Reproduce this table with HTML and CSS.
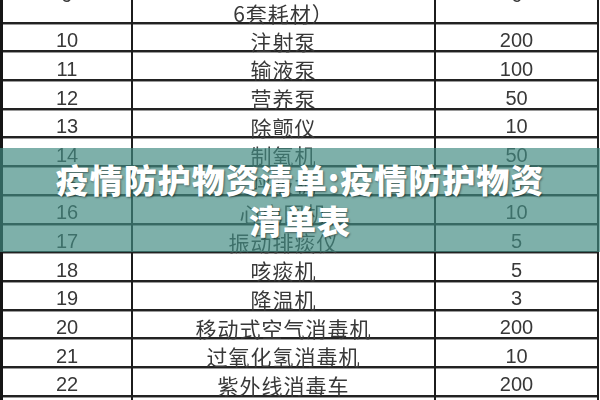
FILE: index.html
```html
<!DOCTYPE html>
<html lang="zh-CN">
<head>
<meta charset="utf-8">
<title>疫情防护物资清单</title>
<link rel="stylesheet" href="styles.css">
</head>
<body>
<div class="page">
  <div class="table">
    <div class="row tall">
      <div class="cell num">9</div>
      <div class="cell name two">高流量呼吸湿化治疗仪（含<br>6套耗材）</div>
      <div class="cell num">6</div>
    </div>
    <div class="row"><div class="cell num">10</div><div class="cell name">注射泵</div><div class="cell num">200</div></div>
    <div class="row"><div class="cell num">11</div><div class="cell name">输液泵</div><div class="cell num">100</div></div>
    <div class="row"><div class="cell num">12</div><div class="cell name">营养泵</div><div class="cell num">50</div></div>
    <div class="row"><div class="cell num">13</div><div class="cell name">除颤仪</div><div class="cell num">10</div></div>
    <div class="row"><div class="cell num">14</div><div class="cell name">制氧机</div><div class="cell num">50</div></div>
    <div class="row"><div class="cell num">15</div><div class="cell name">呼吸机</div><div class="cell num">5</div></div>
    <div class="row"><div class="cell num">16</div><div class="cell name">心电图机</div><div class="cell num">10</div></div>
    <div class="row"><div class="cell num">17</div><div class="cell name">振动排痰仪</div><div class="cell num">5</div></div>
    <div class="row"><div class="cell num">18</div><div class="cell name">咳痰机</div><div class="cell num">5</div></div>
    <div class="row"><div class="cell num">19</div><div class="cell name">降温机</div><div class="cell num">3</div></div>
    <div class="row"><div class="cell num">20</div><div class="cell name">移动式空气消毒机</div><div class="cell num">200</div></div>
    <div class="row"><div class="cell num">21</div><div class="cell name">过氧化氢消毒机</div><div class="cell num">10</div></div>
    <div class="row"><div class="cell num">22</div><div class="cell name">紫外线消毒车</div><div class="cell num">200</div></div>
    <div class="row"><div class="cell num">23</div><div class="cell name">消毒液</div><div class="cell num">500</div></div>
  </div>
  <div class="banner">
    <h1 class="title">疫情防护物资清单:疫情防护物资清单表</h1>
  </div>
</div>
</body>
</html>
```
FILE: styles.css
```css
html, body {
  margin: 0;
  padding: 0;
  width: 600px;
  height: 400px;
  overflow: hidden;
  background: #ffffff;
}

.page {
  position: relative;
  width: 600px;
  height: 400px;
  overflow: hidden;
}

.table {
  box-sizing: border-box;
  width: 599px;
  margin-top: -26.3px;
  border-left: 3px solid #151515;
  border-right: 2px solid #1c1c1c;
  display: flex;
  flex-direction: column;
  filter: blur(0.35px);
}

.row {
  box-sizing: border-box;
  height: 28.7px;
  flex: none;
  display: grid;
  grid-template-columns: 130px 303px 161px;
  border-bottom: 2px solid #222222;
  box-shadow: 0 1px 0 #9a9a9a;
}

.row.tall {
  height: 50px;
}

.cell {
  display: flex;
  align-items: center;
  justify-content: center;
  padding-top: 2px;
  color: #383838;
  font-family: "Liberation Sans", "Noto Sans CJK SC", sans-serif;
  white-space: nowrap;
}

.row.tall .cell {
  padding-top: 0;
  padding-bottom: 9px;
}

.cell.num {
  font-size: 20px;
}

.cell.name {
  font-family: "Noto Sans CJK SC", sans-serif;
  font-size: 21px;
  letter-spacing: 1px;
}

.row.tall .cell.two {
  align-items: flex-end;
  text-align: center;
  line-height: 26px;
  padding-bottom: 0;
}

.row .cell:nth-child(1),
.row .cell:nth-child(2) {
  border-right: 2px solid #1c1c1c;
}

.banner {
  position: absolute;
  left: 0;
  top: 148px;
  width: 600px;
  height: 104px;
  background: rgba(65, 138, 130, 0.68);
  box-sizing: border-box;
  padding: 0 45px;
  display: flex;
  align-items: center;
  justify-content: center;
}

.title {
  margin: 0;
  text-align: center;
  color: #ffffff;
  font-family: "Noto Sans CJK SC", sans-serif;
  font-weight: 900;
  font-size: 33px;
  line-height: 41px;
  letter-spacing: 1px;
  text-shadow: 1px 1px 2px rgba(0, 0, 0, 0.45);
}
```
